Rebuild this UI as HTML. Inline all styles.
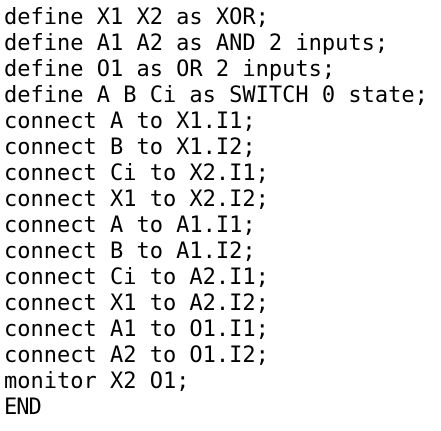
<!DOCTYPE html>
<html><head><style>
html,body{margin:0;padding:0;background:#fff;width:441px;height:431px;overflow:hidden}
pre{margin:0;padding:5px 0 0 4px;font-family:"DejaVu Sans Mono","Liberation Mono",monospace;font-size:22px;line-height:26px;color:#000}
</style></head><body><pre>define X1 X2 as XOR;
define A1 A2 as AND 2 inputs;
define O1 as OR 2 inputs;
define A B Ci as SWITCH 0 state;
connect A to X1.I1;
connect B to X1.I2;
connect Ci to X2.I1;
connect X1 to X2.I2;
connect A to A1.I1;
connect B to A1.I2;
connect Ci to A2.I1;
connect X1 to A2.I2;
connect A1 to O1.I1;
connect A2 to O1.I2;
monitor X2 O1;
<span style="letter-spacing:-1px">END</span></pre></body></html>
